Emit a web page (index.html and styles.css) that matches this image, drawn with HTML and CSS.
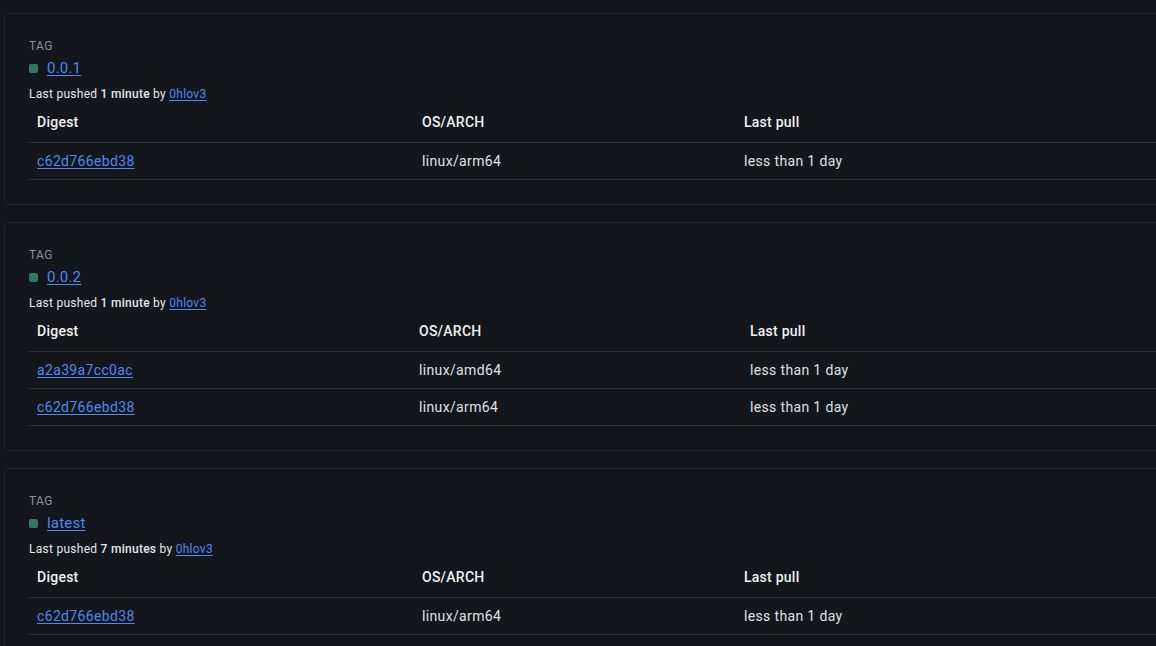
FILE: index.html
```html
<!DOCTYPE html>
<html lang="en">
<head>
    <meta charset="UTF-8">
    <meta name="viewport" content="width=device-width, initial-scale=1.0">
    <title>Tags</title>
    <link rel="stylesheet" href="styles.css">
</head>
<body>
    <div class="tag-list">

        <div class="tag-card">
            <div class="tag-label">TAG</div>
            <div class="tag-name">
                <span class="tag-dot"></span>
                <a href="#" class="link">0.0.1</a>
            </div>
            <div class="pushed">Last pushed <b>1 minute</b> by <a href="#" class="link">0hlov3</a></div>
            <table class="digests wide-os">
                <thead>
                    <tr><th class="col-digest">Digest</th><th class="col-os">OS/ARCH</th><th>Last pull</th></tr>
                </thead>
                <tbody>
                    <tr><td><a href="#" class="link">c62d766ebd38</a></td><td>linux/arm64</td><td>less than 1 day</td></tr>
                </tbody>
            </table>
        </div>

        <div class="tag-card">
            <div class="tag-label">TAG</div>
            <div class="tag-name">
                <span class="tag-dot"></span>
                <a href="#" class="link">0.0.2</a>
            </div>
            <div class="pushed">Last pushed <b>1 minute</b> by <a href="#" class="link">0hlov3</a></div>
            <table class="digests narrow-os">
                <thead>
                    <tr><th class="col-digest">Digest</th><th class="col-os">OS/ARCH</th><th>Last pull</th></tr>
                </thead>
                <tbody>
                    <tr><td><a href="#" class="link">a2a39a7cc0ac</a></td><td>linux/amd64</td><td>less than 1 day</td></tr>
                    <tr><td><a href="#" class="link">c62d766ebd38</a></td><td>linux/arm64</td><td>less than 1 day</td></tr>
                </tbody>
            </table>
        </div>

        <div class="tag-card">
            <div class="tag-label">TAG</div>
            <div class="tag-name">
                <span class="tag-dot"></span>
                <a href="#" class="link">latest</a>
            </div>
            <div class="pushed">Last pushed <b>7 minutes</b> by <a href="#" class="link">0hlov3</a></div>
            <table class="digests wide-os">
                <thead>
                    <tr><th class="col-digest">Digest</th><th class="col-os">OS/ARCH</th><th>Last pull</th></tr>
                </thead>
                <tbody>
                    <tr><td><a href="#" class="link">c62d766ebd38</a></td><td>linux/arm64</td><td>less than 1 day</td></tr>
                </tbody>
            </table>
        </div>

    </div>
</body>
</html>
```

FILE: styles.css
```css
body {
    margin: 0;
    padding: 0;
    background-color: #13161b;
    font-family: Roboto, "Liberation Sans", Arial, sans-serif;
    color: #e4e6ea;
    overflow: hidden;
}

.tag-list {
    padding: 13px 0 0 4px;
    margin-right: -60px;
    display: flex;
    flex-direction: column;
    gap: 17px;
}

.tag-card {
    border: 1px solid #22262d;
    border-radius: 5px;
    padding: 24px 24px 24px 24px;
}

.link {
    color: #4f88f3;
    text-decoration: underline;
    text-underline-offset: 2px;
}

.tag-label {
    font-size: 12px;
    line-height: 16px;
    color: #8690a2;
    letter-spacing: 0.4px;
}

.tag-name {
    display: flex;
    align-items: center;
    gap: 9px;
    margin-top: 4px;
    font-size: 15px;
    line-height: 20px;
    letter-spacing: 0.2px;
}

.tag-dot {
    width: 9px;
    height: 9px;
    border-radius: 2px;
    background-color: #2d7a60;
}

.pushed {
    margin-top: 9px;
    font-size: 12px;
    line-height: 14px;
    color: #e4e6ea;
    letter-spacing: 0.27px;
}

.pushed b {
    font-weight: 500;
}

.digests {
    width: 1150px;
    border-collapse: collapse;
    table-layout: fixed;
    font-size: 14px;
    letter-spacing: 0.35px;
}

.digests th {
    text-align: left;
    font-weight: 500;
    color: #f0f1f3;
    padding: 11px 8px 10px 8px;
    line-height: 20px;
    letter-spacing: 0.25px;
    border-bottom: 1px solid #2c3340;
}

.digests td {
    padding: 8px 8px;
    line-height: 20px;
    border-bottom: 1px solid #2c3340;
    color: #dfe1e5;
}

.wide-os .col-digest {
    width: 369px;
}

.wide-os .col-os {
    width: 306px;
}

.narrow-os .col-digest {
    width: 366px;
}

.narrow-os .col-os {
    width: 315px;
}
```
